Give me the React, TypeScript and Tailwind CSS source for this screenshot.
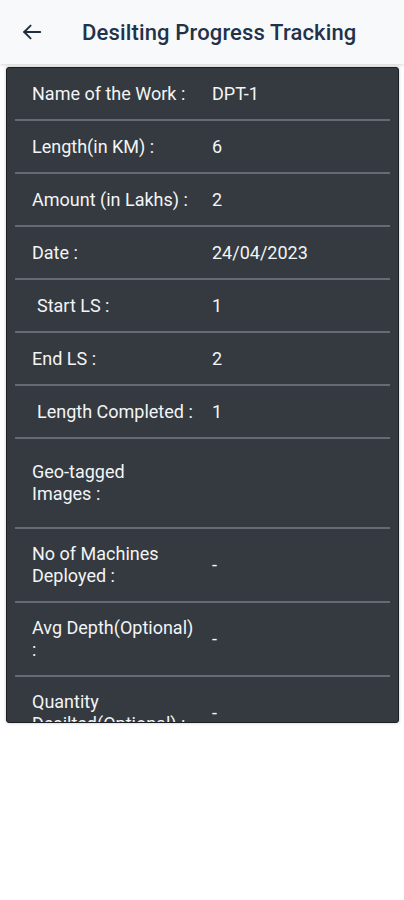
import React from 'react';

type Row = {
  label: React.ReactNode;
  value: string;
  indent?: boolean;
  tall?: boolean;
  big?: boolean;
};

const rows: Row[] = [
  { label: 'Name of the Work :', value: 'DPT-1' },
  { label: 'Length(in KM) :', value: '6' },
  { label: 'Amount (in Lakhs) :', value: '2' },
  { label: 'Date :', value: '24/04/2023' },
  { label: 'Start LS :', value: '1', indent: true },
  { label: 'End LS :', value: '2' },
  { label: 'Length Completed :', value: '1', indent: true },
  {
    label: (
      <>
        Geo-tagged
        <br />
        Images :
      </>
    ),
    value: '',
    big: true,
  },
  { label: 'No of Machines Deployed :', value: '-', tall: true },
  { label: 'Avg Depth(Optional) :', value: '-', tall: true },
  { label: 'Quantity Desilted(Optional) :', value: '-', tall: true },
];

function BackArrow() {
  return (
    <svg width="22" height="22" viewBox="0 0 24 24" fill="none" stroke="#1f2d3f" strokeWidth="2" strokeLinecap="round" strokeLinejoin="round">
      <line x1="21" y1="12" x2="3.5" y2="12" />
      <polyline points="10.5,5 3.5,12 10.5,19" />
    </svg>
  );
}

export default function App() {
  return (
    <div className="w-[404px] h-[900px] bg-white font-['Roboto',sans-serif] overflow-hidden">
      {/* Header */}
      <div className="h-16 bg-[#f8f9fa] flex items-center shadow-[0_1px_4px_rgba(0,0,0,0.18)] relative z-10">
        <div className="pl-[21px] w-[82px] flex items-center">
          <BackArrow />
        </div>
        <div className="text-[22px] font-medium text-[#22324a] tracking-[0.15px]">
          Desilting Progress Tracking
        </div>
      </div>

      {/* Details card */}
      <div className="pr-[5px] pl-[6px] pt-[3px]">
        <div className="h-[656px] overflow-hidden bg-[#343a40] border border-[#1c1f23] rounded-[3px] shadow-[0_0_3px_rgba(0,0,0,0.25)] px-2">
          {rows.map((row, idx) => (
            <div
              key={idx}
              className={`flex items-center border-b-2 border-[#656b72] text-[18px] leading-[22px] text-[#f3f4f5] ${
                row.big ? 'h-[90px]' : row.tall ? 'h-[74px]' : 'h-[53px]'
              }`}
            >
              <div className={`w-[165px] ml-[17px] shrink-0 ${row.indent ? 'pl-[5px]' : ''}`}>
                {row.label}
              </div>
              <div className="ml-[15px]">{row.value}</div>
            </div>
          ))}
        </div>
      </div>
    </div>
  );
}
